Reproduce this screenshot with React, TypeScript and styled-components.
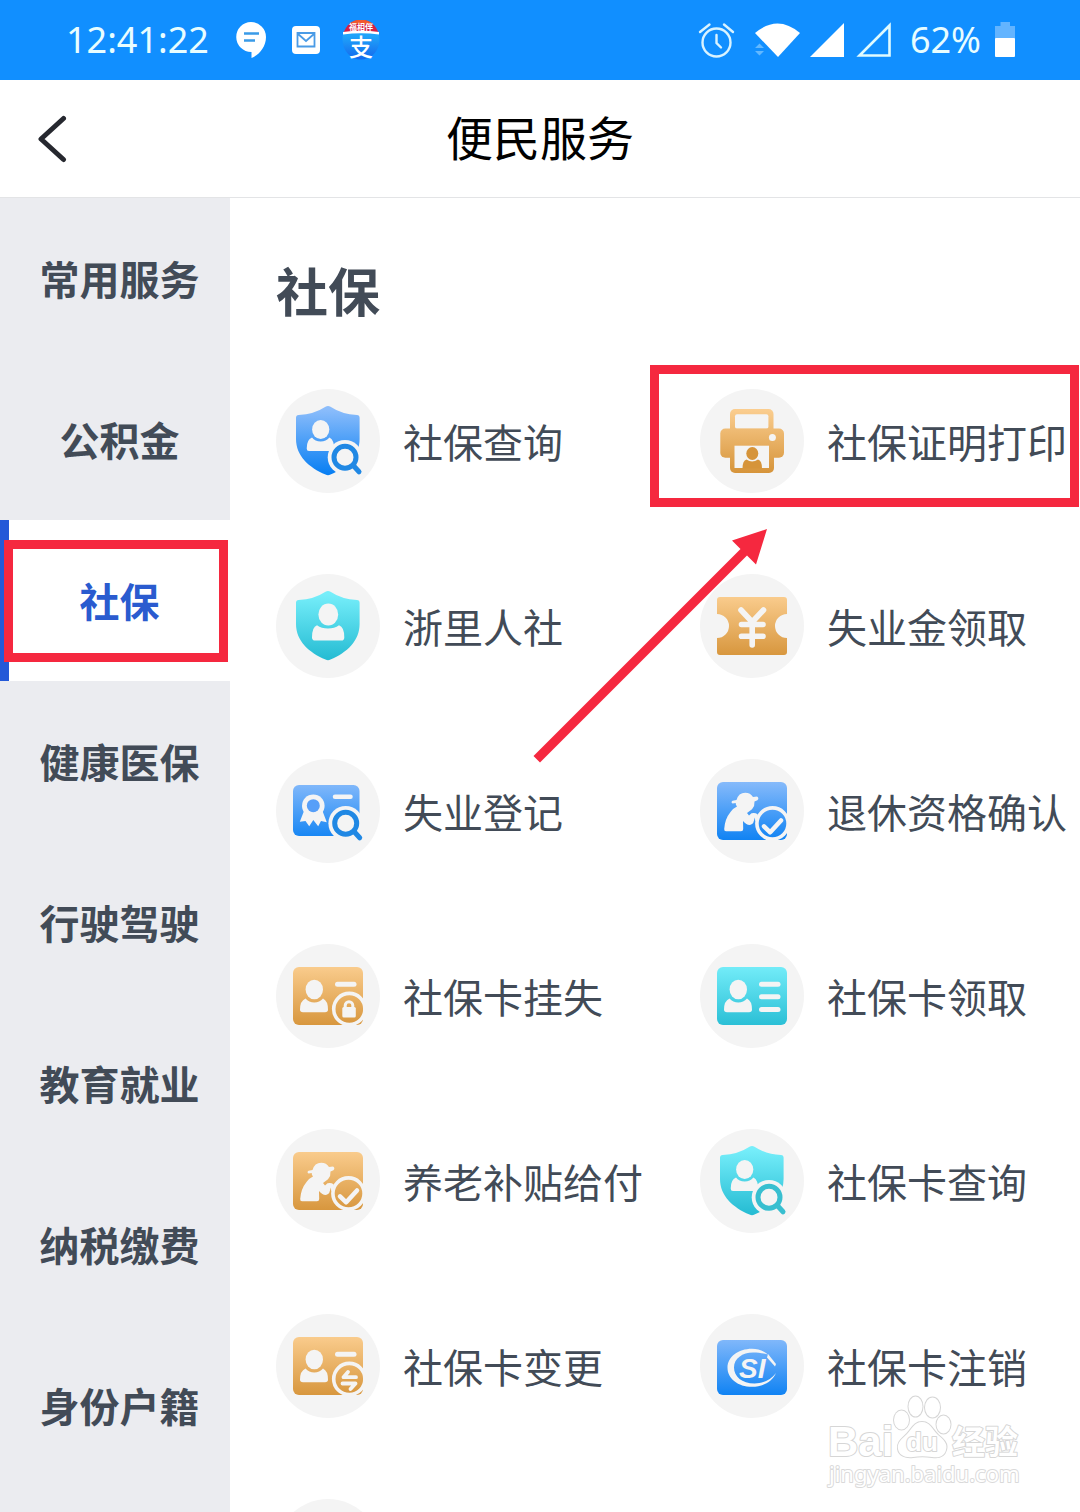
import React from "react";
import styled, { createGlobalStyle, css } from "styled-components";

const RED = "#f5283f";
const PALE = "#f4f4f4";

const GlobalStyle = createGlobalStyle`
  * { box-sizing: border-box; }
  html, body, #root { height: 100%; }
  body {
    margin: 0;
    background: #fff;
    font-family: "Noto Sans", "Noto Sans CJK SC", sans-serif;
  }
  button {
    margin: 0;
    padding: 0;
    border: 0;
    background: none;
    font: inherit;
    color: inherit;
    cursor: pointer;
  }
`;

const Screen = styled.div`
  position: relative;
  display: flex;
  flex-direction: column;
  height: 100%;
  overflow: hidden;
`;

const StatusBar = styled.div`
  flex: none;
  display: flex;
  align-items: center;
  justify-content: space-between;
  height: 80px;
  padding: 0 65px 0 66px;
  background: #118fff;
  color: #e8fdff;
  font-size: 36px;
`;

const StatusGroup = styled.div<{ $gap: number }>`
  display: flex;
  align-items: center;
  gap: ${(p) => p.$gap}px;
`;

const StatusText = styled.span`
  line-height: 80px;
`;

const Header = styled.header`
  flex: none;
  display: grid;
  grid-template-columns: 104px 1fr 104px;
  height: 118px;
  border-bottom: 1px solid #e3e4e6;
`;

const BackButton = styled.button`
  display: flex;
  align-items: center;
  padding-left: 36px;
`;

const Title = styled.h1`
  margin: 0;
  text-align: center;
  color: #000;
  font-family: "Noto Sans CJK SC", sans-serif;
  font-size: 47px;
  font-weight: 400;
  line-height: 112px;
`;

const Body = styled.div`
  flex: 1;
  display: flex;
  min-height: 0;
`;

const Sidebar = styled.nav`
  flex: none;
  width: 230px;
  background: #ebecf0;
  overflow-y: auto;
  scrollbar-width: none;
`;

const Tab = styled.button<{ $active: boolean }>`
  position: relative;
  display: block;
  width: 100%;
  height: 161px;
  padding-bottom: 2px;
  border-left: 9px solid transparent;
  color: #424b57;
  font-family: "Noto Sans CJK SC", sans-serif;
  font-size: 40px;
  font-weight: 700;
  line-height: 60px;
  ${(p) =>
    p.$active &&
    css`
      border-left-color: #2459d8;
      background: #fff;
      color: #2a5bcf;
    `}
`;

const TabMark = styled.span`
  position: absolute;
  inset: 20px 2px 19px -5px;
  border: 9px solid ${RED};
`;

const Main = styled.main`
  position: relative;
  flex: 1;
  min-width: 0;
  padding: 52px 2px 0 0;
  overflow-y: auto;
  overflow-x: hidden;
  scrollbar-width: none;
`;

const SectionTitle = styled.h2`
  margin: 0 0 59px;
  padding-left: 46px;
  color: #424b57;
  font-family: "Noto Sans CJK SC", sans-serif;
  font-size: 52px;
  font-weight: 700;
  line-height: 80px;
`;

const ServiceGrid = styled.div`
  display: grid;
  grid-template-columns: repeat(2, minmax(0, 1fr));
  row-gap: 81px;
`;

const ServiceItem = styled.button`
  position: relative;
  display: flex;
  align-items: center;
  gap: 23px;
  height: 104px;
  padding-left: 46px;
  color: #424b57;
  font-family: "Noto Sans CJK SC", sans-serif;
  font-size: 40px;
  line-height: 60px;
  text-align: left;
  white-space: nowrap;
`;

const Disc = styled.span`
  flex: none;
  display: block;
  width: 104px;
  height: 104px;
  border-radius: 50%;
  background: ${PALE};

  svg {
    display: block;
  }
`;

const ServiceMark = styled.span`
  position: absolute;
  inset: -24px -1px -14px -4px;
  border: 9px solid ${RED};
`;

const ArrowMark = styled.svg`
  position: absolute;
  left: 300px;
  top: 330px;
  pointer-events: none;
`;

const Watermark = styled.svg`
  position: absolute;
  right: 54px;
  bottom: 16px;
  pointer-events: none;
`;

type Tone = "blue" | "teal" | "orange";

const TONES: Record<Tone, [string, string, string]> = {
  blue: ["#8cbdfb", "#0a80f3", "#2088e4"],
  teal: ["#76eefa", "#27bdd4", "#38bfd0"],
  orange: ["#fbce90", "#d6943a", "#d6943a"],
};

function Glyph({
  id,
  tone,
  children,
}: {
  id: string;
  tone: Tone;
  children: (fill: string, deep: string) => React.ReactNode;
}) {
  const [from, to, deep] = TONES[tone];
  return (
    <svg width="104" height="104" viewBox="0 0 104 104" fill="none" aria-hidden="true">
      <defs>
        <linearGradient id={id} gradientUnits="userSpaceOnUse" x1="52" y1="20" x2="52" y2="84">
          <stop offset="0" stopColor={from} />
          <stop offset="1" stopColor={to} />
        </linearGradient>
      </defs>
      {children(`url(#${id})`, deep)}
    </svg>
  );
}

const Shield = ({ fill }: { fill: string }) => (
  <path
    fill={fill}
    d="M49.5 17.8Q52 16.2 54.5 17.8Q66 25.4 81 26Q83.6 26.2 83.6 28.8V50C83.6 67 71 78.5 54.5 85.6Q52 86.8 49.5 85.6C33 78.5 20 67 20 50V28.8Q20 26.2 22.6 26Q38 25.4 49.5 17.8Z"
  />
);

const Card = ({ fill, y = 23, w = 70, h = 58 }: { fill: string; y?: number; w?: number; h?: number }) => (
  <rect x="17" y={y} width={w} height={h} rx="6" fill={fill} />
);

const CardPerson = () => (
  <g fill={PALE}>
    <ellipse cx="38.3" cy="45.5" rx="8.7" ry="9.8" />
    <path d="M29.5 54.5Q33 58.5 38.3 58.5Q43.5 58.5 47 54.5Q52 57 52 65.5Q52 68.3 49 68.3H27Q24 68.3 24 65.5Q24 57 29.5 54.5Z" />
  </g>
);

const Magnifier = ({ cx, cy, deep }: { cx: number; cy: number; deep: string }) => (
  <>
    <circle cx={cx} cy={cy} r="17.3" fill={PALE} />
    <path d={`M${cx + 9} ${cy + 9}L${cx + 14} ${cy + 14.5}`} stroke={deep} strokeWidth="5" strokeLinecap="round" />
    <circle cx={cx} cy={cy} r="11" stroke={deep} strokeWidth="5" fill={PALE} />
  </>
);

function ShieldSearch({ id, tone }: { id: string; tone: Tone }) {
  return (
    <Glyph id={id} tone={tone}>
      {(fill, deep) => (
        <>
          <Shield fill={fill} />
          <g fill={PALE}>
            <ellipse cx="44.7" cy="40.5" rx="8.6" ry="9.5" />
            <path d="M36 48.5Q39 52.5 44.7 52.5Q50 52.5 53.5 48.5Q58.5 51 58.5 62H33Q30.7 62 30.7 59.5Q30.7 50.5 36 48.5Z" />
          </g>
          <Magnifier cx={69} cy={68.3} deep={deep} />
        </>
      )}
    </Glyph>
  );
}

function ShieldPerson({ id }: { id: string }) {
  return (
    <Glyph id={id} tone="teal">
      {(fill) => (
        <>
          <Shield fill={fill} />
          <g fill={PALE}>
            <ellipse cx="52.3" cy="40.5" rx="9.9" ry="11" />
            <path d="M41 51.3Q45.5 54.5 52 54.5Q58.5 54.5 63 51.3Q68.3 53 68.3 63.5Q68.3 66.6 65.3 66.6H39.2Q36 66.6 36 63.5Q36 53 41 51.3Z" />
          </g>
        </>
      )}
    </Glyph>
  );
}

function Printer({ id }: { id: string }) {
  return (
    <Glyph id={id} tone="orange">
      {(fill, deep) => (
        <>
          <rect x="30" y="20" width="43.5" height="30" rx="5" fill={fill} />
          <rect x="35" y="25.3" width="33.4" height="14.5" rx="2" fill={PALE} />
          <rect x="20.3" y="39.5" width="63.7" height="29.2" rx="5" fill={fill} />
          <rect x="30" y="56" width="44" height="28" rx="5" fill={fill} />
          <rect x="34.5" y="56.7" width="34.5" height="22.3" fill={PALE} />
          <circle cx="72.4" cy="48.5" r="3.5" fill={PALE} />
          <ellipse cx="52.3" cy="64.5" rx="6" ry="6.4" fill={deep} />
          <path d="M42.5 79.5Q42.5 71.5 46.5 70.5Q52 74.5 58 70.5Q62 71.5 62 79.5Z" fill={deep} />
        </>
      )}
    </Glyph>
  );
}

function Ticket({ id }: { id: string }) {
  return (
    <Glyph id={id} tone="orange">
      {(fill) => (
        <>
          <path
            fill={fill}
            d="M20 23H84Q87 23 87 26V40A12 12 0 0 0 87 64V78Q87 81 84 81H20Q17 81 17 78V64A12 12 0 0 0 17 40V26Q17 23 20 23Z"
          />
          <path
            d="M41 36L52.2 48L63.5 36M52.2 48V71M41.5 50.5H63M41.5 62.3H63"
            stroke={PALE}
            strokeWidth="5.6"
            strokeLinecap="round"
            strokeLinejoin="round"
          />
        </>
      )}
    </Glyph>
  );
}

function Certificate({ id }: { id: string }) {
  return (
    <Glyph id={id} tone="blue">
      {(fill, deep) => (
        <>
          <Card fill={fill} y={26} w={66.5} h={51} />
          <path d="M28 52L23.8 62.8L29.5 62L33.2 67.3L37.3 61L42.2 67.3L45 62L50.8 63.3L46.5 52Z" fill={PALE} />
          <circle cx="37.3" cy="46.7" r="11.3" fill={PALE} />
          <circle cx="37.3" cy="46.7" r="6.5" fill="#579ff8" />
          <path d="M59 37.8H74.5" stroke={PALE} strokeWidth="4.5" strokeLinecap="round" />
          <Magnifier cx={69.7} cy={64.3} deep={deep} />
        </>
      )}
    </Glyph>
  );
}

const BadgeRing = () => <circle cx="73.3" cy="65" r="15.6" stroke={PALE} strokeWidth="3.6" />;
const CardLine = ({ y }: { y: number }) => (
  <path d={`M61.5 ${y}H78`} stroke={PALE} strokeWidth="5" strokeLinecap="round" />
);

function CardLock({ id }: { id: string }) {
  return (
    <Glyph id={id} tone="orange">
      {(fill) => (
        <>
          <Card fill={fill} />
          <CardPerson />
          <CardLine y={40.3} />
          <BadgeRing />
          <path d="M69.2 64V61.5A3.8 3.8 0 0 1 76.8 61.5V64" stroke={PALE} strokeWidth="3" />
          <rect x="66.3" y="63" width="13.5" height="10.5" rx="1.5" fill={PALE} />
        </>
      )}
    </Glyph>
  );
}

function CardSwap({ id }: { id: string }) {
  return (
    <Glyph id={id} tone="orange">
      {(fill) => (
        <>
          <Card fill={fill} />
          <CardPerson />
          <CardLine y={40.3} />
          <BadgeRing />
          <path
            d="M80 63.2H67.5L72 58M66.5 69.5H79.5L74.5 75"
            stroke={PALE}
            strokeWidth="3.8"
            strokeLinecap="round"
            strokeLinejoin="round"
          />
        </>
      )}
    </Glyph>
  );
}

function IdCard({ id }: { id: string }) {
  return (
    <Glyph id={id} tone="teal">
      {(fill) => (
        <>
          <Card fill={fill} />
          <CardPerson />
          <CardLine y={40.3} />
          <CardLine y={52.8} />
          <CardLine y={65.5} />
        </>
      )}
    </Glyph>
  );
}

function Elder({ id, tone }: { id: string; tone: Tone }) {
  return (
    <Glyph id={id} tone={tone}>
      {(fill) => (
        <>
          <Card fill={fill} />
          <path
            fill={PALE}
            d="M36.5 41Q38.5 33.7 45.2 33.7Q50.5 33.7 53 38L57 37.5Q59.5 39 57.4 41.2L54.5 42.4Q55 46.5 52 50.2L47 54L49 56.5L51.5 54.3Q55 53.3 57.5 55.3L58.5 62.5L55.5 62L54.6 58.5Q54 65.2 50.5 65.8Q47 66.5 43 62L43.2 70Q43.2 72.3 41 72.3H26Q24 72.3 24.2 70Q24.8 60 30.5 53Q33.5 49 37 47.5Q35.5 45.5 35.7 44L32.5 44.4Q30.5 43.5 32.5 41.8Z"
          />
          <circle cx="72.5" cy="64.5" r="15.6" stroke={PALE} strokeWidth="3.6" />
          <path
            d="M64 67.3L70.2 73.3L81 61.5"
            stroke={PALE}
            strokeWidth="4.5"
            strokeLinecap="round"
            strokeLinejoin="round"
          />
        </>
      )}
    </Glyph>
  );
}

function SiCard({ id }: { id: string }) {
  return (
    <Glyph id={id} tone="blue">
      {(fill) => (
        <>
          <Card fill={fill} y={26} h={55} />
          <path
            fill={PALE}
            d="M68 40.5C64 37 58.5 34.7 52 34.7C38 34.7 27.5 43 27.5 53.7C27.5 64.5 38 72.8 52 72.8C63 72.8 72.5 67.5 76 59C71 65.5 63.5 69.5 54.5 69.5C42 69.5 34 62.5 34 53.5C34 44.5 42.5 38.5 53 38.5C59 38.5 64 39.5 68 40.5Z"
          />
          <path fill={PALE} d="M68 40L76 50L75 52.5L67 43.5Z" />
          <text x="39" y="64" fill={PALE} fontFamily="Liberation Sans, sans-serif" fontSize="28" fontWeight="700" fontStyle="italic">
            SI
          </text>
        </>
      )}
    </Glyph>
  );
}

const TABS = ["常用服务", "公积金", "社保", "健康医保", "行驶驾驶", "教育就业", "纳税缴费", "身份户籍"];

const SERVICES: { label: string; icon: React.ReactNode; marked?: boolean }[] = [
  { label: "社保查询", icon: <ShieldSearch id="g1" tone="blue" /> },
  { label: "社保证明打印", icon: <Printer id="g2" />, marked: true },
  { label: "浙里人社", icon: <ShieldPerson id="g3" /> },
  { label: "失业金领取", icon: <Ticket id="g4" /> },
  { label: "失业登记", icon: <Certificate id="g5" /> },
  { label: "退休资格确认", icon: <Elder id="g6" tone="blue" /> },
  { label: "社保卡挂失", icon: <CardLock id="g7" /> },
  { label: "社保卡领取", icon: <IdCard id="g8" /> },
  { label: "养老补贴给付", icon: <Elder id="g9" tone="orange" /> },
  { label: "社保卡查询", icon: <ShieldSearch id="g10" tone="teal" /> },
  { label: "社保卡变更", icon: <CardSwap id="g11" /> },
  { label: "社保卡注销", icon: <SiCard id="g12" /> },
  { label: "", icon: null },
];

function StatusIcons() {
  return (
    <StatusGroup $gap={15}>
      <svg width="40" height="40" viewBox="0 0 40 40" aria-hidden="true">
        <path d="M20 2A15 15 0 0 1 35 17C35 27 28 35 20.5 38V32A15 15 0 0 1 20 2Z" fill="#fff" />
        <path d="M13 13.5H28M13 20.5H24" stroke="#3a9be8" strokeWidth="2.5" />
      </svg>
      <svg width="40" height="40" viewBox="0 0 40 40" fill="none" aria-hidden="true">
        <rect x="6" y="6" width="28" height="28" rx="4" fill="#fff" />
        <path d="M11.5 13H28.5V26.5H11.5ZM11.5 13.5L20 21L28.5 13.5" stroke="#4a9be6" strokeWidth="1.8" />
      </svg>
      <svg width="40" height="40" viewBox="0 0 40 40" overflow="visible" aria-hidden="true">
        <defs>
          <clipPath id="payClip">
            <ellipse cx="20" cy="19.5" rx="18.5" ry="20" />
          </clipPath>
          <linearGradient id="payBlue" x1="0" y1="0" x2="0" y2="1">
            <stop offset="0.4" stopColor="#1fa4fa" />
            <stop offset="1" stopColor="#1466ec" />
          </linearGradient>
        </defs>
        <g clipPath="url(#payClip)">
          <rect width="40" height="40" fill="url(#payBlue)" />
          <path d="M0 0H40V13Q20 9 0 13Z" fill="#d51f43" />
          <path d="M0 0H40V4H0Z" fill="#f0582f" />
        </g>
        <path d="M2 12Q20 9.5 38 12V14.5Q20 12 2 14.5Z" fill="#fff" />
        <text x="20" y="10" textAnchor="middle" fill="#fff" fontFamily="Noto Sans CJK SC, sans-serif" fontSize="8" fontWeight="700">
          福相伴
        </text>
        <text x="20" y="36" textAnchor="middle" fill="#fff" fontFamily="Noto Sans CJK SC, sans-serif" fontSize="24" fontWeight="500">
          支
        </text>
      </svg>
    </StatusGroup>
  );
}

function SignalIcons() {
  return (
    <StatusGroup $gap={10}>
      <svg width="44" height="36" viewBox="0 0 44 36" fill="none" stroke="#d9f3ff" strokeWidth="2.4" strokeLinecap="round" aria-hidden="true">
        <circle cx="18.5" cy="20.5" r="14" />
        <path d="M18.5 13V21L23 25.5" />
        <path d="M2 10L11.5 2.5M26 2.5L35 10" />
      </svg>
      <svg width="48" height="36" viewBox="0 0 48 36" fill="#fff" aria-hidden="true">
        <path d="M3 11Q25.500 -8 48 11L26 35Z" />
        <path d="M3 26L7.500 21.5L12 26ZM3 29L7.500 33.5L12 29Z" fill="#63b8ff" />
      </svg>
      <svg width="36" height="36" viewBox="0 0 36 36" fill="#fff" aria-hidden="true">
        <path d="M34 1V35H0Z" />
      </svg>
      <svg width="36" height="36" viewBox="0 0 36 36" fill="none" aria-hidden="true">
        <path d="M33.5 3.5V33.5H3.5Z" stroke="#e0fbff" strokeWidth="2.6" />
      </svg>
    </StatusGroup>
  );
}

export default function App() {
  return (
    <Screen>
      <GlobalStyle />
      <StatusBar>
        <StatusGroup $gap={22}>
          <StatusText>12:41:22</StatusText>
          <StatusIcons />
        </StatusGroup>
        <StatusGroup $gap={18}>
          <SignalIcons />
          <StatusGroup $gap={14}>
            <StatusText>62%</StatusText>
            <svg width="20" height="36" viewBox="0 0 20 36" aria-hidden="true">
              <path d="M5.5 0H15V4H20V17H0V4H5.5Z" fill="#63b4ff" />
              <rect y="16" width="20" height="19" rx="1" fill="#fff" />
            </svg>
          </StatusGroup>
        </StatusGroup>
      </StatusBar>

      <Header>
        <BackButton aria-label="返回">
          <svg width="32" height="48" viewBox="0 0 32 48" fill="none" aria-hidden="true">
            <path
              d="M27.5 3.5L5 24L27.5 44.5"
              stroke="#26282f"
              strokeWidth="5"
              strokeLinecap="round"
              strokeLinejoin="round"
            />
          </svg>
        </BackButton>
        <Title>便民服务</Title>
      </Header>

      <Body>
        <Sidebar>
          {TABS.map((label) => (
            <Tab key={label} $active={label === "社保"}>
              {label}
              {label === "社保" && <TabMark />}
            </Tab>
          ))}
        </Sidebar>
        <Main>
          <SectionTitle>社保</SectionTitle>
          <ServiceGrid>
            {SERVICES.map((s, i) => (
              <ServiceItem key={i} aria-label={s.label || "更多"}>
                <Disc>{s.icon}</Disc>
                {s.label && <span>{s.label}</span>}
                {s.marked && <ServiceMark />}
              </ServiceItem>
            ))}
          </ServiceGrid>
          <ArrowMark width="245" height="240" viewBox="0 0 245 240" aria-hidden="true">
            <path d="M237 1L202 12.5L210.5 21L3.5 228L10 234.5L217 27.5L226 36.5Z" fill={RED} />
          </ArrowMark>
        </Main>
      </Body>

      <Watermark width="200" height="104" viewBox="0 0 200 104" aria-hidden="true">
        <g fill="#fff" stroke="#d6d6d6" strokeWidth="2" paintOrder="stroke" strokeLinejoin="round" fontWeight="700">
          <text x="2" y="64" fontFamily="Liberation Sans, sans-serif" fontSize="42">
            Bai
          </text>
          <ellipse cx="75.5" cy="28" rx="7.5" ry="9.5" />
          <ellipse cx="89.5" cy="14.5" rx="7" ry="10" />
          <ellipse cx="106.5" cy="15.5" rx="7.5" ry="10" />
          <ellipse cx="117.5" cy="32.5" rx="7" ry="9" />
          <path d="M96 30C104 30 106 37 112 43C118 48 122 52 120 58C118 65 112 66 106 65C99 64 93 64 87 65C79 66 73 63 72 57C71 50 76 47 81 42C86 37 88 30 96 30Z" />
          <text x="80" y="59" fontFamily="Liberation Sans, sans-serif" fontSize="26">
            du
          </text>
          <text x="126" y="62" fontFamily="Noto Sans CJK SC, sans-serif" fontSize="33">
            经验
          </text>
        </g>
        <text
          x="3"
          y="90"
          fontFamily="Noto Sans, sans-serif"
          fontSize="22"
          fill="#fff"
          stroke="#dadada"
          strokeWidth="2"
          paintOrder="stroke"
          strokeLinejoin="round"
        >
          jingyan.baidu.com
        </text>
      </Watermark>
    </Screen>
  );
}
